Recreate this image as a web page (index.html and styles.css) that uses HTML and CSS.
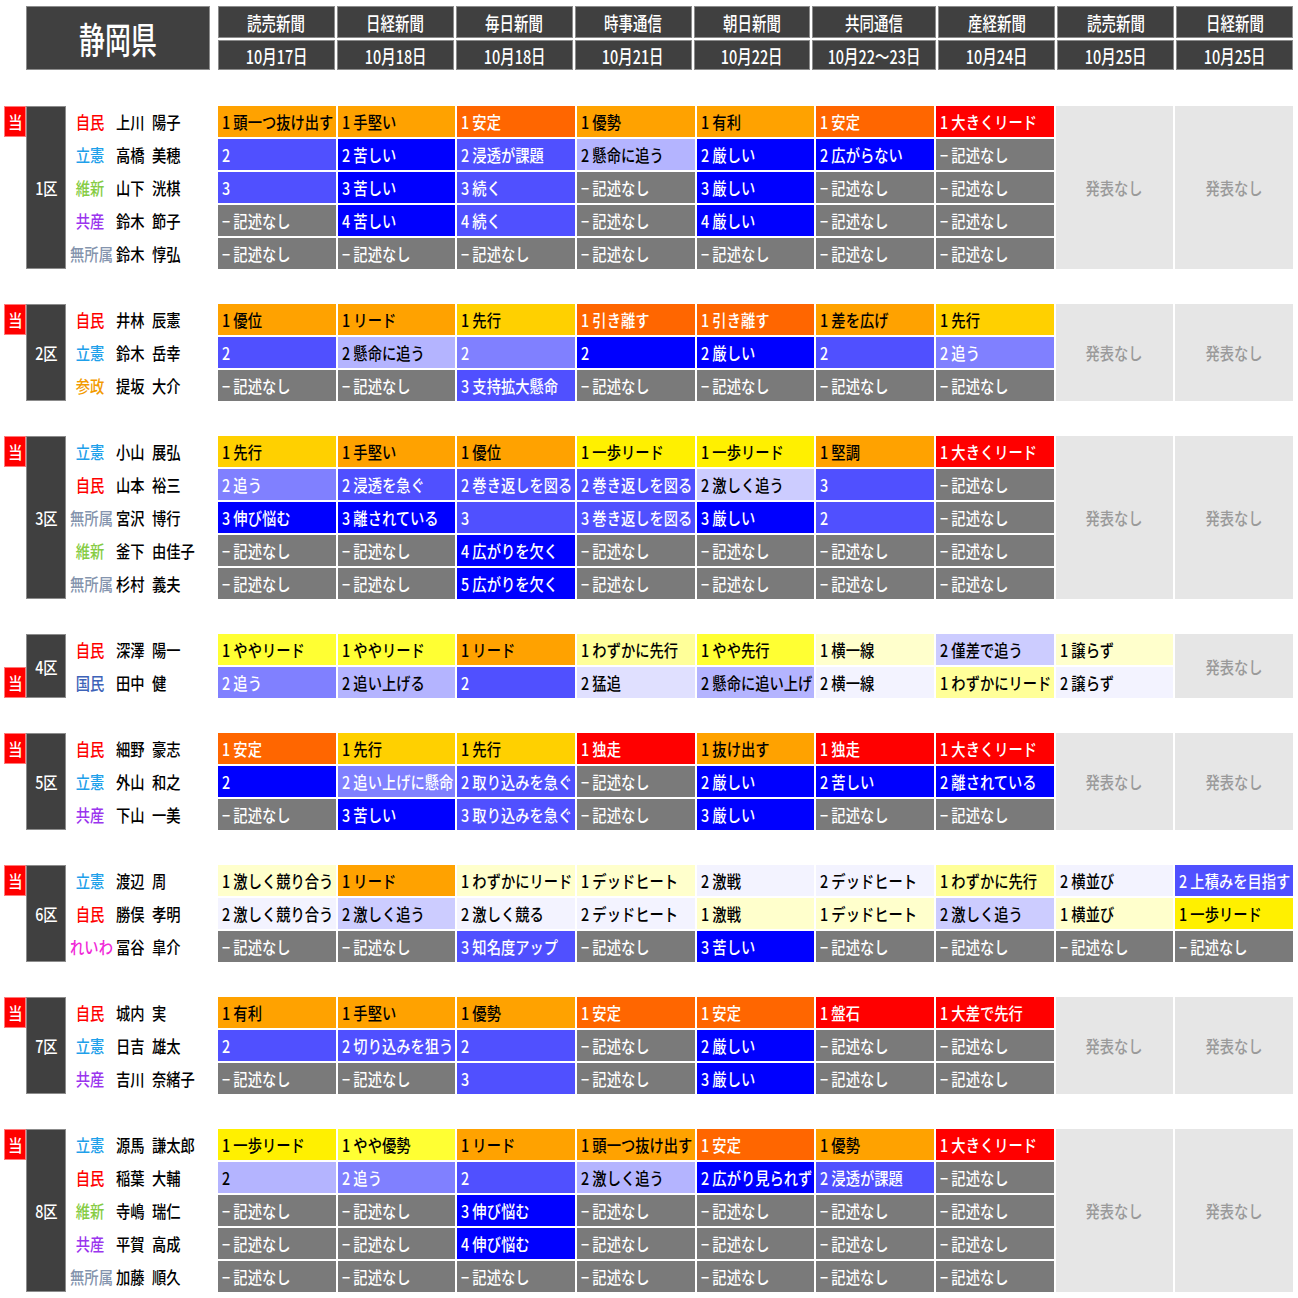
FILE: index.html
```html
<!DOCTYPE html>
<html lang="ja">
<head>
<meta charset="utf-8">
<title>静岡県 情勢</title>
<link rel="stylesheet" href="styles.css">
</head>
<body>
<div class="page">
  <div class="top">
    <div class="pref"><span>静岡県</span></div>
    <div class="heads">
      <div class="h"><span>読売新聞</span></div>
      <div class="h"><span>日経新聞</span></div>
      <div class="h"><span>毎日新聞</span></div>
      <div class="h"><span>時事通信</span></div>
      <div class="h"><span>朝日新聞</span></div>
      <div class="h"><span>共同通信</span></div>
      <div class="h"><span>産経新聞</span></div>
      <div class="h"><span>読売新聞</span></div>
      <div class="h"><span>日経新聞</span></div>
      <div class="h"><span>10月17日</span></div>
      <div class="h"><span>10月18日</span></div>
      <div class="h"><span>10月18日</span></div>
      <div class="h"><span>10月21日</span></div>
      <div class="h"><span>10月22日</span></div>
      <div class="h"><span>10月22～23日</span></div>
      <div class="h"><span>10月24日</span></div>
      <div class="h"><span>10月25日</span></div>
      <div class="h"><span>10月25日</span></div>
    </div>
  </div>

  <div class="districts">
    <!-- 1区 -->
    <section class="d">
      <div class="badges r5"><div class="win at1"><span>当</span></div></div>
      <div class="lbl"><span>1区</span></div>
      <div class="cands r5">
        <div class="cand"><span class="pt jimin"><span>自民</span></span><span class="nm"><span>上川 陽子</span></span></div>
        <div class="cand"><span class="pt rikken"><span>立憲</span></span><span class="nm"><span>高橋 美穂</span></span></div>
        <div class="cand"><span class="pt ishin"><span>維新</span></span><span class="nm"><span>山下 洸棋</span></span></div>
        <div class="cand"><span class="pt kyosan"><span>共産</span></span><span class="nm"><span>鈴木 節子</span></span></div>
        <div class="cand"><span class="pt mu"><span>無所属</span></span><span class="nm"><span>鈴木 惇弘</span></span></div>
      </div>
      <div class="data r5">
        <div class="na col8"><span>発表なし</span></div>
        <div class="na col9"><span>発表なし</span></div>
        <div class="c o"><span>1 頭一つ抜け出す</span></div>
        <div class="c o"><span>1 手堅い</span></div>
        <div class="c do"><span>1 安定</span></div>
        <div class="c o"><span>1 優勢</span></div>
        <div class="c o"><span>1 有利</span></div>
        <div class="c do"><span>1 安定</span></div>
        <div class="c r"><span>1 大きくリード</span></div>
        <div class="c mb"><span>2</span></div>
        <div class="c b"><span>2 苦しい</span></div>
        <div class="c mb"><span>2 浸透が課題</span></div>
        <div class="c lb"><span>2 懸命に追う</span></div>
        <div class="c b"><span>2 厳しい</span></div>
        <div class="c b"><span>2 広がらない</span></div>
        <div class="c gr"><span>− 記述なし</span></div>
        <div class="c mb"><span>3</span></div>
        <div class="c b"><span>3 苦しい</span></div>
        <div class="c mb"><span>3 続く</span></div>
        <div class="c gr"><span>− 記述なし</span></div>
        <div class="c b"><span>3 厳しい</span></div>
        <div class="c gr"><span>− 記述なし</span></div>
        <div class="c gr"><span>− 記述なし</span></div>
        <div class="c gr"><span>− 記述なし</span></div>
        <div class="c b"><span>4 苦しい</span></div>
        <div class="c mb"><span>4 続く</span></div>
        <div class="c gr"><span>− 記述なし</span></div>
        <div class="c b"><span>4 厳しい</span></div>
        <div class="c gr"><span>− 記述なし</span></div>
        <div class="c gr"><span>− 記述なし</span></div>
        <div class="c gr"><span>− 記述なし</span></div>
        <div class="c gr"><span>− 記述なし</span></div>
        <div class="c gr"><span>− 記述なし</span></div>
        <div class="c gr"><span>− 記述なし</span></div>
        <div class="c gr"><span>− 記述なし</span></div>
        <div class="c gr"><span>− 記述なし</span></div>
        <div class="c gr"><span>− 記述なし</span></div>
      </div>
    </section>

    <!-- 2区 -->
    <section class="d">
      <div class="badges r3"><div class="win at1"><span>当</span></div></div>
      <div class="lbl"><span>2区</span></div>
      <div class="cands r3">
        <div class="cand"><span class="pt jimin"><span>自民</span></span><span class="nm"><span>井林 辰憲</span></span></div>
        <div class="cand"><span class="pt rikken"><span>立憲</span></span><span class="nm"><span>鈴木 岳幸</span></span></div>
        <div class="cand"><span class="pt sansei"><span>参政</span></span><span class="nm"><span>提坂 大介</span></span></div>
      </div>
      <div class="data r3">
        <div class="na col8"><span>発表なし</span></div>
        <div class="na col9"><span>発表なし</span></div>
        <div class="c o"><span>1 優位</span></div>
        <div class="c o"><span>1 リード</span></div>
        <div class="c g"><span>1 先行</span></div>
        <div class="c do"><span>1 引き離す</span></div>
        <div class="c do"><span>1 引き離す</span></div>
        <div class="c o"><span>1 差を広げ</span></div>
        <div class="c g"><span>1 先行</span></div>
        <div class="c mb"><span>2</span></div>
        <div class="c lb"><span>2 懸命に追う</span></div>
        <div class="c pb"><span>2</span></div>
        <div class="c b"><span>2</span></div>
        <div class="c b"><span>2 厳しい</span></div>
        <div class="c mb"><span>2</span></div>
        <div class="c pb"><span>2 追う</span></div>
        <div class="c gr"><span>− 記述なし</span></div>
        <div class="c gr"><span>− 記述なし</span></div>
        <div class="c mb"><span>3 支持拡大懸命</span></div>
        <div class="c gr"><span>− 記述なし</span></div>
        <div class="c gr"><span>− 記述なし</span></div>
        <div class="c gr"><span>− 記述なし</span></div>
        <div class="c gr"><span>− 記述なし</span></div>
      </div>
    </section>

    <!-- 3区 -->
    <section class="d">
      <div class="badges r5"><div class="win at1"><span>当</span></div></div>
      <div class="lbl"><span>3区</span></div>
      <div class="cands r5">
        <div class="cand"><span class="pt rikken"><span>立憲</span></span><span class="nm"><span>小山 展弘</span></span></div>
        <div class="cand"><span class="pt jimin"><span>自民</span></span><span class="nm"><span>山本 裕三</span></span></div>
        <div class="cand"><span class="pt mu"><span>無所属</span></span><span class="nm"><span>宮沢 博行</span></span></div>
        <div class="cand"><span class="pt ishin"><span>維新</span></span><span class="nm"><span>釜下 由佳子</span></span></div>
        <div class="cand"><span class="pt mu"><span>無所属</span></span><span class="nm"><span>杉村 義夫</span></span></div>
      </div>
      <div class="data r5">
        <div class="na col8"><span>発表なし</span></div>
        <div class="na col9"><span>発表なし</span></div>
        <div class="c g"><span>1 先行</span></div>
        <div class="c o"><span>1 手堅い</span></div>
        <div class="c o"><span>1 優位</span></div>
        <div class="c y2"><span>1 一歩リード</span></div>
        <div class="c y2"><span>1 一歩リード</span></div>
        <div class="c o"><span>1 堅調</span></div>
        <div class="c r"><span>1 大きくリード</span></div>
        <div class="c pb"><span>2 追う</span></div>
        <div class="c mb"><span>2 浸透を急ぐ</span></div>
        <div class="c mb"><span>2 巻き返しを図る</span></div>
        <div class="c mb"><span>2 巻き返しを図る</span></div>
        <div class="c lv"><span>2 激しく追う</span></div>
        <div class="c mb"><span>3</span></div>
        <div class="c gr"><span>− 記述なし</span></div>
        <div class="c b"><span>3 伸び悩む</span></div>
        <div class="c b"><span>3 離されている</span></div>
        <div class="c mb"><span>3</span></div>
        <div class="c mb"><span>3 巻き返しを図る</span></div>
        <div class="c b"><span>3 厳しい</span></div>
        <div class="c mb"><span>2</span></div>
        <div class="c gr"><span>− 記述なし</span></div>
        <div class="c gr"><span>− 記述なし</span></div>
        <div class="c gr"><span>− 記述なし</span></div>
        <div class="c b"><span>4 広がりを欠く</span></div>
        <div class="c gr"><span>− 記述なし</span></div>
        <div class="c gr"><span>− 記述なし</span></div>
        <div class="c gr"><span>− 記述なし</span></div>
        <div class="c gr"><span>− 記述なし</span></div>
        <div class="c gr"><span>− 記述なし</span></div>
        <div class="c gr"><span>− 記述なし</span></div>
        <div class="c b"><span>5 広がりを欠く</span></div>
        <div class="c gr"><span>− 記述なし</span></div>
        <div class="c gr"><span>− 記述なし</span></div>
        <div class="c gr"><span>− 記述なし</span></div>
        <div class="c gr"><span>− 記述なし</span></div>
      </div>
    </section>

    <!-- 4区 -->
    <section class="d">
      <div class="badges r2"><div class="win at2"><span>当</span></div></div>
      <div class="lbl"><span>4区</span></div>
      <div class="cands r2">
        <div class="cand"><span class="pt jimin"><span>自民</span></span><span class="nm"><span>深澤 陽一</span></span></div>
        <div class="cand"><span class="pt kokumin"><span>国民</span></span><span class="nm"><span>田中 健</span></span></div>
      </div>
      <div class="data r2">
        <div class="na col9"><span>発表なし</span></div>
        <div class="c y"><span>1 ややリード</span></div>
        <div class="c y"><span>1 ややリード</span></div>
        <div class="c o"><span>1 リード</span></div>
        <div class="c py"><span>1 わずかに先行</span></div>
        <div class="c y"><span>1 やや先行</span></div>
        <div class="c ly"><span>1 横一線</span></div>
        <div class="c lv"><span>2 僅差で追う</span></div>
        <div class="c ly"><span>1 譲らず</span></div>
        <div class="c pb"><span>2 追う</span></div>
        <div class="c lb"><span>2 追い上げる</span></div>
        <div class="c mb"><span>2</span></div>
        <div class="c vp2"><span>2 猛追</span></div>
        <div class="c lb"><span>2 懸命に追い上げ</span></div>
        <div class="c vp"><span>2 横一線</span></div>
        <div class="c py"><span>1 わずかにリード</span></div>
        <div class="c vp"><span>2 譲らず</span></div>
      </div>
    </section>

    <!-- 5区 -->
    <section class="d">
      <div class="badges r3"><div class="win at1"><span>当</span></div></div>
      <div class="lbl"><span>5区</span></div>
      <div class="cands r3">
        <div class="cand"><span class="pt jimin"><span>自民</span></span><span class="nm"><span>細野 豪志</span></span></div>
        <div class="cand"><span class="pt rikken"><span>立憲</span></span><span class="nm"><span>外山 和之</span></span></div>
        <div class="cand"><span class="pt kyosan"><span>共産</span></span><span class="nm"><span>下山 一美</span></span></div>
      </div>
      <div class="data r3">
        <div class="na col8"><span>発表なし</span></div>
        <div class="na col9"><span>発表なし</span></div>
        <div class="c do"><span>1 安定</span></div>
        <div class="c g"><span>1 先行</span></div>
        <div class="c g"><span>1 先行</span></div>
        <div class="c r"><span>1 独走</span></div>
        <div class="c o"><span>1 抜け出す</span></div>
        <div class="c r"><span>1 独走</span></div>
        <div class="c r"><span>1 大きくリード</span></div>
        <div class="c b"><span>2</span></div>
        <div class="c pb"><span>2 追い上げに懸命</span></div>
        <div class="c mb"><span>2 取り込みを急ぐ</span></div>
        <div class="c gr"><span>− 記述なし</span></div>
        <div class="c b"><span>2 厳しい</span></div>
        <div class="c b"><span>2 苦しい</span></div>
        <div class="c b"><span>2 離されている</span></div>
        <div class="c gr"><span>− 記述なし</span></div>
        <div class="c b"><span>3 苦しい</span></div>
        <div class="c mb"><span>3 取り込みを急ぐ</span></div>
        <div class="c gr"><span>− 記述なし</span></div>
        <div class="c b"><span>3 厳しい</span></div>
        <div class="c gr"><span>− 記述なし</span></div>
        <div class="c gr"><span>− 記述なし</span></div>
      </div>
    </section>

    <!-- 6区 -->
    <section class="d">
      <div class="badges r3"><div class="win at1"><span>当</span></div></div>
      <div class="lbl"><span>6区</span></div>
      <div class="cands r3">
        <div class="cand"><span class="pt rikken"><span>立憲</span></span><span class="nm"><span>渡辺 周</span></span></div>
        <div class="cand"><span class="pt jimin"><span>自民</span></span><span class="nm"><span>勝俣 孝明</span></span></div>
        <div class="cand"><span class="pt reiwa"><span>れいわ</span></span><span class="nm"><span>冨谷 皐介</span></span></div>
      </div>
      <div class="data r3">
        <div class="c ly"><span>1 激しく競り合う</span></div>
        <div class="c o"><span>1 リード</span></div>
        <div class="c ly"><span>1 わずかにリード</span></div>
        <div class="c ly"><span>1 デッドヒート</span></div>
        <div class="c vp"><span>2 激戦</span></div>
        <div class="c vp"><span>2 デッドヒート</span></div>
        <div class="c py"><span>1 わずかに先行</span></div>
        <div class="c vp"><span>2 横並び</span></div>
        <div class="c mb"><span>2 上積みを目指す</span></div>
        <div class="c vp"><span>2 激しく競り合う</span></div>
        <div class="c lv"><span>2 激しく追う</span></div>
        <div class="c vp"><span>2 激しく競る</span></div>
        <div class="c vp"><span>2 デッドヒート</span></div>
        <div class="c ly"><span>1 激戦</span></div>
        <div class="c ly"><span>1 デッドヒート</span></div>
        <div class="c lv"><span>2 激しく追う</span></div>
        <div class="c ly"><span>1 横並び</span></div>
        <div class="c y2"><span>1 一歩リード</span></div>
        <div class="c gr"><span>− 記述なし</span></div>
        <div class="c gr"><span>− 記述なし</span></div>
        <div class="c mb"><span>3 知名度アップ</span></div>
        <div class="c gr"><span>− 記述なし</span></div>
        <div class="c b"><span>3 苦しい</span></div>
        <div class="c gr"><span>− 記述なし</span></div>
        <div class="c gr"><span>− 記述なし</span></div>
        <div class="c gr"><span>− 記述なし</span></div>
        <div class="c gr"><span>− 記述なし</span></div>
      </div>
    </section>

    <!-- 7区 -->
    <section class="d">
      <div class="badges r3"><div class="win at1"><span>当</span></div></div>
      <div class="lbl"><span>7区</span></div>
      <div class="cands r3">
        <div class="cand"><span class="pt jimin"><span>自民</span></span><span class="nm"><span>城内 実</span></span></div>
        <div class="cand"><span class="pt rikken"><span>立憲</span></span><span class="nm"><span>日吉 雄太</span></span></div>
        <div class="cand"><span class="pt kyosan"><span>共産</span></span><span class="nm"><span>吉川 奈緒子</span></span></div>
      </div>
      <div class="data r3">
        <div class="na col8"><span>発表なし</span></div>
        <div class="na col9"><span>発表なし</span></div>
        <div class="c o"><span>1 有利</span></div>
        <div class="c o"><span>1 手堅い</span></div>
        <div class="c o"><span>1 優勢</span></div>
        <div class="c do"><span>1 安定</span></div>
        <div class="c do"><span>1 安定</span></div>
        <div class="c r"><span>1 盤石</span></div>
        <div class="c r"><span>1 大差で先行</span></div>
        <div class="c mb"><span>2</span></div>
        <div class="c mb"><span>2 切り込みを狙う</span></div>
        <div class="c mb"><span>2</span></div>
        <div class="c gr"><span>− 記述なし</span></div>
        <div class="c b"><span>2 厳しい</span></div>
        <div class="c gr"><span>− 記述なし</span></div>
        <div class="c gr"><span>− 記述なし</span></div>
        <div class="c gr"><span>− 記述なし</span></div>
        <div class="c gr"><span>− 記述なし</span></div>
        <div class="c mb"><span>3</span></div>
        <div class="c gr"><span>− 記述なし</span></div>
        <div class="c b"><span>3 厳しい</span></div>
        <div class="c gr"><span>− 記述なし</span></div>
        <div class="c gr"><span>− 記述なし</span></div>
      </div>
    </section>

    <!-- 8区 -->
    <section class="d">
      <div class="badges r5"><div class="win at1"><span>当</span></div></div>
      <div class="lbl"><span>8区</span></div>
      <div class="cands r5">
        <div class="cand"><span class="pt rikken"><span>立憲</span></span><span class="nm"><span>源馬 謙太郎</span></span></div>
        <div class="cand"><span class="pt jimin"><span>自民</span></span><span class="nm"><span>稲葉 大輔</span></span></div>
        <div class="cand"><span class="pt ishin"><span>維新</span></span><span class="nm"><span>寺嶋 瑞仁</span></span></div>
        <div class="cand"><span class="pt kyosan"><span>共産</span></span><span class="nm"><span>平賀 高成</span></span></div>
        <div class="cand"><span class="pt mu"><span>無所属</span></span><span class="nm"><span>加藤 順久</span></span></div>
      </div>
      <div class="data r5">
        <div class="na col8"><span>発表なし</span></div>
        <div class="na col9"><span>発表なし</span></div>
        <div class="c y2"><span>1 一歩リード</span></div>
        <div class="c y"><span>1 やや優勢</span></div>
        <div class="c o"><span>1 リード</span></div>
        <div class="c o"><span>1 頭一つ抜け出す</span></div>
        <div class="c do"><span>1 安定</span></div>
        <div class="c o"><span>1 優勢</span></div>
        <div class="c r"><span>1 大きくリード</span></div>
        <div class="c lb"><span>2</span></div>
        <div class="c pb"><span>2 追う</span></div>
        <div class="c mb"><span>2</span></div>
        <div class="c lb"><span>2 激しく追う</span></div>
        <div class="c b"><span>2 広がり見られず</span></div>
        <div class="c mb"><span>2 浸透が課題</span></div>
        <div class="c gr"><span>− 記述なし</span></div>
        <div class="c gr"><span>− 記述なし</span></div>
        <div class="c gr"><span>− 記述なし</span></div>
        <div class="c b"><span>3 伸び悩む</span></div>
        <div class="c gr"><span>− 記述なし</span></div>
        <div class="c gr"><span>− 記述なし</span></div>
        <div class="c gr"><span>− 記述なし</span></div>
        <div class="c gr"><span>− 記述なし</span></div>
        <div class="c gr"><span>− 記述なし</span></div>
        <div class="c gr"><span>− 記述なし</span></div>
        <div class="c b"><span>4 伸び悩む</span></div>
        <div class="c gr"><span>− 記述なし</span></div>
        <div class="c gr"><span>− 記述なし</span></div>
        <div class="c gr"><span>− 記述なし</span></div>
        <div class="c gr"><span>− 記述なし</span></div>
        <div class="c gr"><span>− 記述なし</span></div>
        <div class="c gr"><span>− 記述なし</span></div>
        <div class="c gr"><span>− 記述なし</span></div>
        <div class="c gr"><span>− 記述なし</span></div>
        <div class="c gr"><span>− 記述なし</span></div>
        <div class="c gr"><span>− 記述なし</span></div>
        <div class="c gr"><span>− 記述なし</span></div>
      </div>
    </section>
  </div>
</div>
</body>
</html>
```

FILE: styles.css
```css
* { box-sizing: border-box; margin: 0; padding: 0; }

body {
  background: #fff;
  font-family: "Noto Sans CJK JP", "Noto Sans", sans-serif;
  font-weight: 500;
  color: #000;
}

.page {
  padding: 6px 0 0 4px;
  width: 1293px;
}

/* ---------- header ---------- */
.top {
  display: flex;
  margin-left: 22px;
}

.pref {
  width: 184px;
  height: 64px;
  background: #404040;
  border: 1px solid #8c8c8c;
  color: #fff;
  display: flex;
  align-items: center;
  justify-content: center;
  font-size: 36px;
  line-height: 1;
}
.pref span { display: inline-block; transform: scaleX(0.72); }

.heads {
  margin-left: 8px;
  flex: 1;
  display: grid;
  grid-template-columns: repeat(9, 1fr);
  grid-template-rows: 32px 30px;
  gap: 2px;
}

.h {
  background: #404040;
  border: 1px solid #8c8c8c;
  color: #fff;
  display: flex;
  align-items: center;
  justify-content: center;
  font-size: 19px;
  line-height: 1;
  white-space: nowrap;
}
.h span { display: inline-block; transform: scaleX(0.76); }

/* ---------- districts ---------- */
.districts {
  margin-top: 36px;
  display: flex;
  flex-direction: column;
  gap: 35px;
}

.d { display: flex; }

.r5 { grid-template-rows: repeat(5, 31px); }
.r3 { grid-template-rows: repeat(3, 31px); }
.r2 { grid-template-rows: repeat(2, 31px); }

.badges {
  width: 22px;
  display: grid;
  row-gap: 2px;
}
.win {
  background: #ff0000;
  border: 1px solid #ff7a7a;
  color: #fff;
  font-size: 17px;
  display: flex;
  align-items: center;
  justify-content: center;
}
.win span { display: inline-block; transform: scaleX(0.84); }
.at1 { grid-row: 1; }
.at2 { grid-row: 2; }

.lbl {
  width: 40px;
  background: #404040;
  border: 1px solid #8c8c8c;
  color: #fff;
  font-size: 17px;
  display: flex;
  align-items: center;
  justify-content: center;
}
.lbl span { display: inline-block; transform: scaleX(0.84); }

.cands {
  width: 152px;
  display: grid;
  row-gap: 2px;
}
.cand {
  display: flex;
  align-items: center;
  font-size: 17px;
  white-space: nowrap;
}
.pt { width: 48px; text-align: center; }
.pt span { display: inline-block; transform: scaleX(0.84); }
.nm { padding-left: 2px; }
.nm span {
  display: inline-block;
  transform: scaleX(0.84);
  transform-origin: 0 50%;
  word-spacing: 5px;
}

.jimin { color: #ff0000; }
.rikken { color: #1ea0ea; }
.ishin { color: #86cc44; }
.kyosan { color: #9a35ee; }
.mu { color: #8494ad; }
.sansei { color: #f29a00; }
.kokumin { color: #3d62b8; }
.reiwa { color: #f02ad8; }

.data {
  width: 1075px;
  display: grid;
  grid-template-columns: repeat(9, 1fr);
  gap: 2px;
}

.c {
  font-size: 17px;
  line-height: 31px;
  padding-left: 4px;
  overflow: hidden;
  white-space: nowrap;
}
.c span {
  display: inline-block;
  transform: scaleX(0.84);
  transform-origin: 0 50%;
}

.na {
  background: #e6e6e6;
  color: #9a9a9a;
  font-size: 17px;
  display: flex;
  align-items: center;
  justify-content: center;
  grid-row: 1 / -1;
}
.na span { display: inline-block; transform: scaleX(0.84); }
.col8 { grid-column: 8; }
.col9 { grid-column: 9; }

/* cell colours */
.o   { background: #ffa200; color: #000; }
.do  { background: #ff6600; color: #fff; }
.r   { background: #ff0000; color: #fff; }
.g   { background: #ffd000; color: #000; }
.y   { background: #ffff33; color: #000; }
.y2  { background: #fff000; color: #000; }
.py  { background: #ffff99; color: #000; }
.ly  { background: #ffffcc; color: #000; }
.b   { background: #0000ff; color: #fff; }
.mb  { background: #5050ff; color: #fff; }
.pb  { background: #8080ff; color: #fff; }
.lb  { background: #b4b4ff; color: #000; }
.lv  { background: #ccccff; color: #000; }
.vp  { background: #f3f3ff; color: #000; }
.vp2 { background: #e0e0ff; color: #000; }
.gr  { background: #7a7a7a; color: #fff; }
```
